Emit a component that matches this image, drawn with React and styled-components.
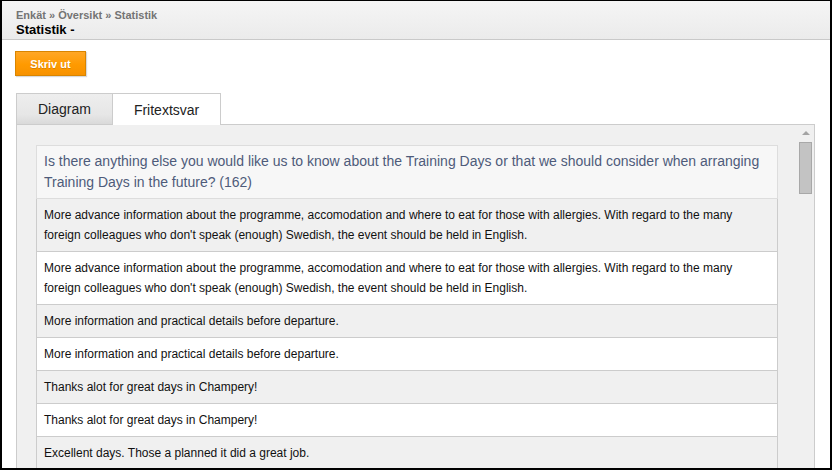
import React from "react";
import styled, { createGlobalStyle } from "styled-components";

const GlobalStyle = createGlobalStyle`
  html, body {
    margin: 0;
    padding: 0;
    background: #fff;
  }
  body {
    font-family: "Liberation Sans", Arial, sans-serif;
  }
`;

const Frame = styled.div`
  box-sizing: border-box;
  width: 832px;
  height: 470px;
  border-style: solid;
  border-color: #000;
  border-width: 1px 2px 2px 2px;
  display: flex;
  flex-direction: column;
  overflow: hidden;
  background: #fff;
`;

const Header = styled.div`
  box-sizing: border-box;
  flex-shrink: 0;
  height: 39px;
  padding: 8px 14px 0;
  border-bottom: 1px solid #c9c9c9;
  background: linear-gradient(#f5f5f5, #ebebeb);
`;

const Crumbs = styled.div`
  font-size: 11px;
  line-height: 13px;
  font-weight: bold;
  color: #747474;
`;

const Title = styled.div`
  font-size: 13px;
  line-height: 16px;
  font-weight: bold;
  color: #000;
`;

const Main = styled.div`
  flex: 1;
  min-height: 0;
  display: flex;
  flex-direction: column;
  align-items: flex-start;
  padding: 11px 15px 0 13px;
`;

const PrintButton = styled.button`
  box-sizing: border-box;
  flex-shrink: 0;
  width: 71px;
  height: 25px;
  margin: 0 0 17px;
  padding: 0;
  border: 1px solid #d98500;
  background: linear-gradient(#ffa726, #ff9a00 55%, #f79200);
  box-shadow: 1px 1px 1px rgba(0, 0, 0, 0.15);
  color: #fff;
  font-family: "Liberation Sans", Arial, sans-serif;
  font-size: 11px;
  font-weight: bold;
  text-shadow: 0 1px 0 rgba(150, 80, 0, 0.35);
  cursor: pointer;
`;

const Tabs = styled.div`
  display: flex;
  flex-shrink: 0;
  margin-left: 1px;
`;

const Tab = styled.div`
  box-sizing: border-box;
  height: ${(p) => (p.active ? "32px" : "31px")};
  margin-bottom: ${(p) => (p.active ? "-1px" : "0")};
  padding: 0 21px;
  display: flex;
  align-items: center;
  border: 1px solid #cccccc;
  border-bottom: none;
  border-left: ${(p) => (p.active ? "none" : "1px solid #cccccc")};
  background: ${(p) =>
    p.active ? "#fff" : "linear-gradient(#eeeeee, #e6e6e6 70%, #d9d9d9)"};
  font-size: 14px;
  color: #222;
  position: relative;
  z-index: 1;
`;

const Panel = styled.div`
  align-self: stretch;
  flex: 1;
  min-height: 0;
  margin-left: 1px;
  display: flex;
  border: 1px solid #cccccc;
  border-bottom: none;
  background: #f0f0f0;
`;

const Content = styled.div`
  flex: 1;
  padding: 20px 19px 0 19px;
`;

const Question = styled.div`
  padding: 5px 7px;
  border: 1px solid #dddddd;
  background: #f7f7f7;
  font-size: 14px;
  line-height: 21px;
  color: #4e5b7a;
`;

const Answer = styled.div`
  padding: 6px 7px;
  border: 1px solid #cccccc;
  border-top: none;
  background: ${(p) => (p.odd ? "#f0f0f0" : "#ffffff")};
  font-size: 12px;
  line-height: 20px;
  color: #111;
`;

const Scrollbar = styled.div`
  width: 17px;
  display: flex;
  flex-direction: column;
  align-items: center;
  padding-top: 6px;
`;

const UpArrow = styled.div`
  width: 0;
  height: 0;
  border-left: 4px solid transparent;
  border-right: 4px solid transparent;
  border-bottom: 4px solid #a3a3a3;
`;

const Thumb = styled.div`
  box-sizing: border-box;
  width: 13px;
  height: 52px;
  margin-top: 7px;
  border: 1px solid #a8a8a8;
  background: #c3c3c3;
`;

const answers = [
  "More advance information about the programme, accomodation and where to eat for those with allergies. With regard to the many foreign colleagues who don't speak (enough) Swedish, the event should be held in English.",
  "More advance information about the programme, accomodation and where to eat for those with allergies. With regard to the many foreign colleagues who don't speak (enough) Swedish, the event should be held in English.",
  "More information and practical details before departure.",
  "More information and practical details before departure.",
  "Thanks alot for great days in Champery!",
  "Thanks alot for great days in Champery!",
  "Excellent days. Those a planned it did a great job.",
];

export default function App() {
  return (
    <>
      <GlobalStyle />
      <Frame>
        <Header>
          <Crumbs>Enkät » Översikt » Statistik</Crumbs>
          <Title>Statistik -</Title>
        </Header>
        <Main>
          <PrintButton>Skriv ut</PrintButton>
          <Tabs>
            <Tab>Diagram</Tab>
            <Tab active>Fritextsvar</Tab>
          </Tabs>
          <Panel>
            <Content>
              <Question>
                Is there anything else you would like us to know about the
                Training Days or that we should consider when arranging
                <br />
                Training Days in the future? (162)
              </Question>
              {answers.map((text, i) => (
                <Answer key={i} odd={i % 2 === 0}>
                  {text}
                </Answer>
              ))}
            </Content>
            <Scrollbar>
              <UpArrow />
              <Thumb />
            </Scrollbar>
          </Panel>
        </Main>
      </Frame>
    </>
  );
}
